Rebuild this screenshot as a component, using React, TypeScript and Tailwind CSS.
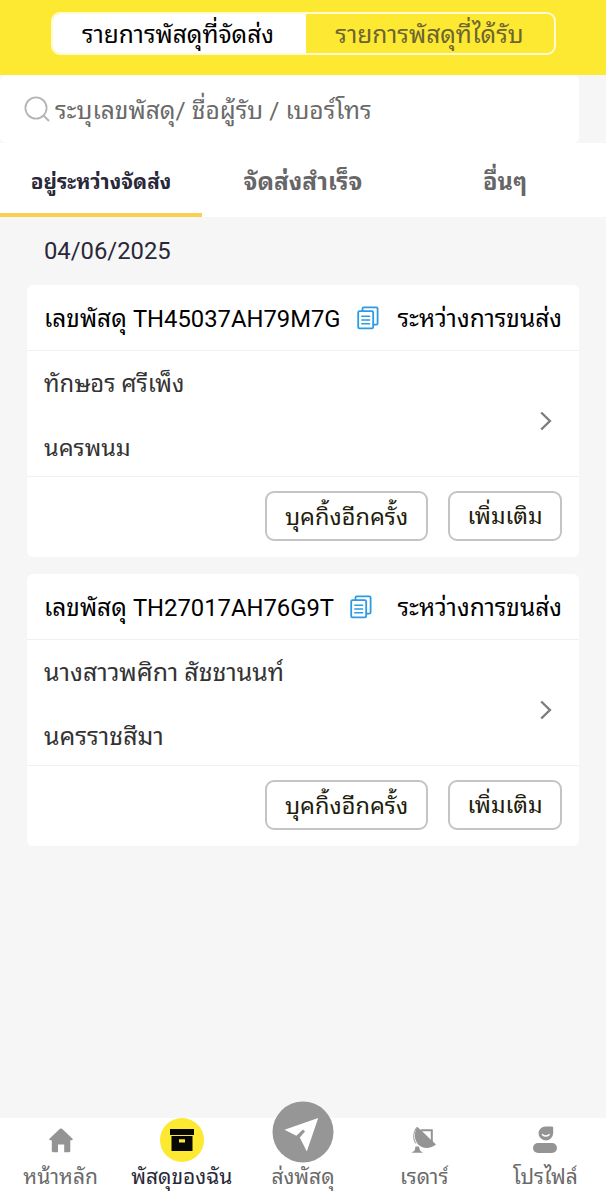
import React from "react";

type Parcel = { code: string; name: string; city: string; nameClass: string; cityClass: string };

const parcels: Parcel[] = [
  { code: "TH45037AH79M7G", name: "ทักษอร ศรีเพ็ง", city: "นครพนม", nameClass: "text-[23.8px]", cityClass: "text-[23.5px]" },
  { code: "TH27017AH76G9T", name: "นางสาวพศิกา สัชชานนท์", city: "นครราชสีมา", nameClass: "text-[24.9px]", cityClass: "text-[24.9px]" },
];

function CopyIcon() {
  return (
    <svg width="22" height="24" viewBox="0 0 22 24" fill="none" stroke="#2d9ae3" strokeWidth="1.8" strokeLinecap="round" strokeLinejoin="round">
      <path d="M5.5 5V2.6C5.5 1.9 6 1.3 6.8 1.3H19.2C20 1.3 20.6 1.9 20.6 2.6V17.2C20.6 18 20 18.7 19.2 18.7H16.5" />
      <rect x="1.2" y="5.2" width="15" height="17.2" rx="1.3" />
      <path d="M4.8 10.2H12.6M4.8 14H12.6M4.8 17.8H12.6" strokeWidth="1.5" />
    </svg>
  );
}

function ParcelCard({ parcel }: { parcel: Parcel }) {
  return (
    <article className="h-[272px] rounded-md bg-white text-[24.5px] leading-[34px]">
      <div className="flex h-[66px] items-center border-b border-[#f1f1f1] px-[17px] text-black">
        <span className="pt-[3px] whitespace-nowrap">
          เลขพัสดุ <span className="text-[23.8px]">{parcel.code}</span>
        </span>
        <span className="ml-[16px] shrink-0">
          <CopyIcon />
        </span>
        <span className="ml-auto pt-[3px] whitespace-nowrap">ระหว่างการขนส่ง</span>
      </div>
      <div className="flex h-[126px] items-center justify-between border-b border-[#f1f1f1] pr-[27px] pl-[17px] text-[#333]">
        <div className="flex h-full flex-col justify-between pt-4 pb-[11px]">
          <span className={`whitespace-nowrap ${parcel.nameClass}`}>{parcel.name}</span>
          <span className={`whitespace-nowrap ${parcel.cityClass}`}>{parcel.city}</span>
        </div>
        <svg width="12" height="20" viewBox="0 0 12 20" fill="none" stroke="#7d7d7d" strokeWidth="2.4" className="mt-[14px]">
          <path d="M1.2 1.5L9.9 10L1.2 18.5" />
        </svg>
      </div>
      <div className="flex justify-end gap-5 px-[17px] pt-[14px] text-[23.5px] text-[#211c0b]">
        <button className="h-[50px] w-[163px] rounded-[9px] border-2 border-[#c4c4c4] pt-[2px] whitespace-nowrap">บุคกิ้งอีกครั้ง</button>
        <button className="h-[50px] w-[114px] rounded-[9px] border-2 border-[#c4c4c4] pt-[2px] text-[23px] whitespace-nowrap">เพิ่มเติม</button>
      </div>
    </article>
  );
}

function HomeIcon() {
  return (
    <svg width="24" height="25" viewBox="0 0 24 25" fill="#949494">
      <path d="M11 .8Q12 0 13 .8L23.3 10.6Q24.4 12 22.8 12.3H21.3V22.8Q21.3 24.3 19.8 24.3H15.2V16.5H9V24.3H4.3Q2.8 24.3 2.8 22.8V12.3H1.2Q-.4 12 .7 10.6Z" />
    </svg>
  );
}

function BoxIcon() {
  return (
    <svg width="44" height="44" viewBox="0 0 44 44">
      <circle cx="22" cy="22" r="22" fill="#fde832" />
      <path d="M10 11H34V17H10Z" fill="#080808" />
      <path fillRule="evenodd" d="M11.5 18H32.5V33H11.5ZM19 21.3V24.5H25V21.3Z" fill="#080808" />
    </svg>
  );
}

function SendIcon() {
  return (
    <svg width="62" height="62" viewBox="0 0 62 62">
      <circle cx="31" cy="31" r="30.5" fill="#969696" />
      <path d="M46.2 17L12.5 28.8L24.3 34.7L31 28.5L33 30.5L27.8 36.5L34.8 50.5Z" fill="#fff" />
    </svg>
  );
}

function RadarIcon() {
  return (
    <svg width="26" height="28" viewBox="0 0 26 28">
      <path d="M10 4.2H20.8V17" fill="none" stroke="#949494" strokeWidth="2" />
      <path d="M6.5 1C11 5 20 14 25 18.5C19 23.5 11 22.8 7 18.2C3 13.5 2.8 6 6.5 1Z" fill="#949494" />
      <path d="M6.3 1C1.7 6 1.8 13.5 5 17.5" fill="none" stroke="#949494" strokeWidth="1" />
      <path d="M4.5 20.5H8L9 24.5L12 26.8H.5L3.7 24.5Z" fill="#949494" />
    </svg>
  );
}

function ProfileIcon() {
  return (
    <svg width="26" height="28" viewBox="0 0 26 28">
      <path d="M13.5 .5H20Q21.2 .5 21.2 1.7V7A7.4 7.4 0 0 1 13.8 14.4A7.2 7.2 0 0 1 6.5 7.2A6.8 6.8 0 0 1 13.5 .5Z" fill="#949494" />
      <path d="M10.4 8.6Q13.8 11.4 17.2 8.6" fill="none" stroke="#fff" strokeWidth="1.4" strokeLinecap="round" />
      <rect x="1" y="17" width="24" height="10" rx="5" fill="#949494" />
    </svg>
  );
}

const navItems = [
  { label: "หน้าหลัก", icon: <HomeIcon />, active: false },
  { label: "พัสดุของฉัน", icon: <BoxIcon />, active: true },
  { label: "ส่งพัสดุ", icon: <SendIcon />, active: false },
  { label: "เรดาร์", icon: <RadarIcon />, active: false },
  { label: "โปรไฟล์", icon: <ProfileIcon />, active: false },
];

export default function App() {
  return (
    <div className="flex h-[1200px] w-[606px] flex-col overflow-hidden bg-[#f6f6f6] font-[Roboto,'Noto_Sans_Thai_Looped','Noto_Sans',sans-serif]">
      <header className="flex h-[75px] shrink-0 justify-center bg-[#fde832] pt-[12px]">
        <div className="flex h-[43px] w-[505px] overflow-hidden rounded-[9px] border-2 border-[#fffbd0] text-[24.5px] leading-[34px]">
          <button className="w-[253px] bg-white pt-[2px] pr-[2px] whitespace-nowrap text-black">รายการพัสดุที่จัดส่ง</button>
          <button className="flex-1 pt-[2px] whitespace-nowrap text-[#6b6533]">รายการพัสดุที่ได้รับ</button>
        </div>
      </header>
      <div className="flex h-[68px] w-[579px] shrink-0 items-center rounded-md bg-white pl-[24px] text-[24.6px] leading-[34px] text-[#6a6a6a]">
        <svg width="26" height="26" viewBox="0 0 26 26" fill="none" stroke="#b5b5b5" strokeWidth="1.8">
          <circle cx="12" cy="12" r="10.6" />
          <path d="M19.5 19.5L25 25" strokeWidth="2" />
        </svg>
        <span className="ml-[5px] pt-[3px] whitespace-nowrap">ระบุเลขพัสดุ/ ชื่อผู้รับ / เบอร์โทร</span>
      </div>
      <nav className="grid h-[74px] shrink-0 grid-cols-3 bg-white text-center font-bold">
        <button className="border-b-4 border-[#fbcf52] pt-[7px] text-[20.8px] leading-[34px] text-[#292838]">อยู่ระหว่างจัดส่ง</button>
        <button className="border-b-4 border-transparent pt-[7px] text-[24.4px] leading-[34px] text-[#666]">จัดส่งสำเร็จ</button>
        <button className="border-b-4 border-transparent pt-[7px] text-[23.5px] leading-[34px] text-[#666]">อื่นๆ</button>
      </nav>
      <main className="flex-1 px-[27px]">
        <h2 className="flex h-[68px] items-center pt-[2px] pl-[17px] text-[23.8px] text-[#292838]">04/06/2025</h2>
        <div className="flex flex-col gap-[17px]">
          {parcels.map((p) => (
            <ParcelCard key={p.code} parcel={p} />
          ))}
        </div>
      </main>
      <footer className="grid h-[82px] shrink-0 grid-cols-5 bg-white text-[21px] leading-[30px]">
        {navItems.map((item) => (
          <button key={item.label} className="flex flex-col items-center">
            <span className="flex h-[44px] items-center justify-center">
              {item.label === "ส่งพัสดุ" ? <span className="-mt-[17px]">{item.icon}</span> : item.icon}
            </span>
            <span className={item.active ? "whitespace-nowrap text-[#292838]" : "whitespace-nowrap text-[#6a6a6a]"}>{item.label}</span>
          </button>
        ))}
      </footer>
    </div>
  );
}
